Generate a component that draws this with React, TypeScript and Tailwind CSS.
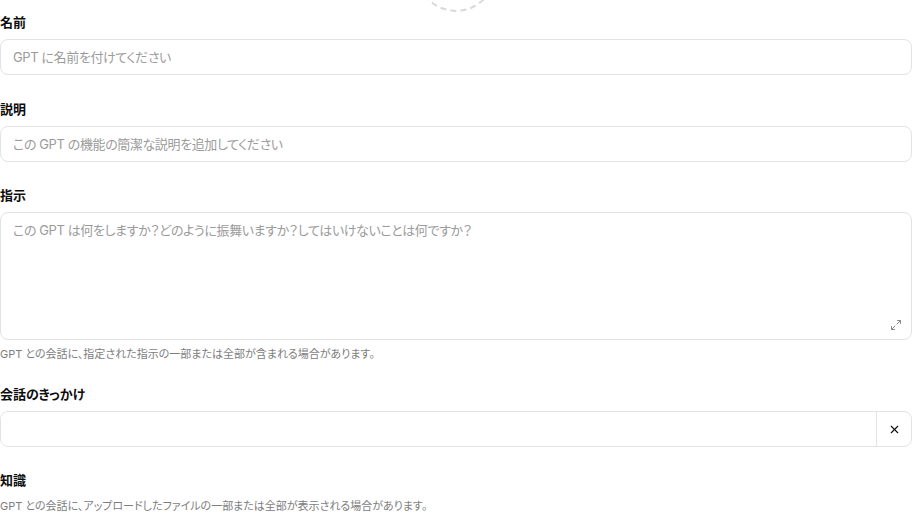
import { Maximize2, X } from 'lucide-react';

const font = "font-['Inter','Noto_Sans_CJK_JP',sans-serif] [font-feature-settings:'palt']";

function Label({ children }: { children: React.ReactNode }) {
  return <div className="mb-[7px] text-[13px] leading-5 font-semibold text-[#0d0d0d]">{children}</div>;
}

export default function App() {
  const inputCls =
    'h-9 w-full rounded-lg border border-[#e3e3e3] bg-white px-3 text-[13px] tracking-[-0.03em] text-[#0d0d0d] placeholder:text-[#9b9b9b] outline-none';

  return (
    <div className={`min-h-screen bg-white ${font}`}>
      <div className="w-[912px]">
        <div className="flex h-3 items-end justify-center overflow-hidden">
          <div className="h-20 w-20 shrink-0 rounded-full border-2 border-dashed border-[#d9d9d9]" />
        </div>

        <div>
          <Label>名前</Label>
          <input className={inputCls} placeholder="GPT に名前を付けてください" />
        </div>

        <div className="mt-6">
          <Label>説明</Label>
          <input className={inputCls} placeholder="この GPT の機能の簡潔な説明を追加してください" />
        </div>

        <div className="mt-[23px]">
          <Label>指示</Label>
          <div className="relative">
            <textarea
              className="block h-32 w-full resize-none rounded-lg border border-[#e3e3e3] bg-white px-3 py-2 text-[13px] tracking-[-0.03em] text-[#0d0d0d] placeholder:text-[#9b9b9b] outline-none"
              placeholder="この GPT は何をしますか？どのように振舞いますか？してはいけないことは何ですか？"
            />
            <Maximize2 className="absolute bottom-[9px] right-[10px] text-[#8a8a8a]" size={12} strokeWidth={2} />
          </div>
          <div className="mt-1.5 text-[11px] leading-4 text-[#7d7d7d]">
            GPT との会話に、指定された指示の一部または全部が含まれる場合があります。
          </div>
        </div>

        <div className="mt-[22px]">
          <Label>会話のきっかけ</Label>
          <div className="flex h-9 w-full overflow-hidden rounded-lg border border-[#e3e3e3]">
            <input className="h-full flex-1 bg-white px-3 text-[13px] outline-none" />
            <button className="flex w-[35px] items-center justify-center border-l border-[#e3e3e3] text-[#0d0d0d]">
              <X size={13} strokeWidth={2} />
            </button>
          </div>
        </div>

        <div className="mt-[23px]">
          <div className="mb-2 text-[13px] leading-5 font-semibold text-[#0d0d0d]">知識</div>
          <div className="text-[11px] leading-4 text-[#7d7d7d]">
            GPT との会話に、アップロードしたファイルの一部または全部が表示される場合があります。
          </div>
        </div>
      </div>
    </div>
  );
}
